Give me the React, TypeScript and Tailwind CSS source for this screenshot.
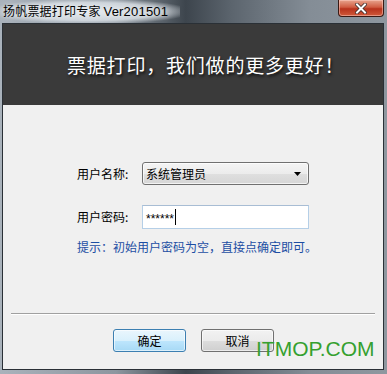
import React from "react";

const cjk = { fontFamily: '"Microsoft YaHei", "Noto Sans CJK SC", "Noto Sans", sans-serif' };

export default function App() {
  return (
    <div
      className="relative w-[387px] h-[374px] overflow-hidden flex flex-col bg-[linear-gradient(90deg,#a9b2bb_0%,#8d969f_30%,#3d454d_48%,#5c656e_60%,#848d96_80%,#8e979f_100%)]"
      style={cjk}
    >
      {/* title bar */}
      <div className="relative h-[23px] shrink-0 flex items-center pl-[3px]">
        <div className="absolute left-0 top-0 w-[180px] h-[23px] bg-[radial-gradient(ellipse_at_center,rgba(230,235,240,0.95)_0%,rgba(220,226,232,0.8)_55%,rgba(220,226,232,0)_80%)]" />
        <span className="relative text-[12px] leading-[14px] text-black tracking-[0.2px] [text-shadow:0_0_6px_rgba(255,255,255,0.9)]">
          扬帆票据打印专家 <span style={{ fontFamily: '"Segoe UI", "Liberation Sans", sans-serif' }} className="text-[13px]">Ver201501</span>
        </span>
        {/* close button */}
        <div className="absolute left-[338px] top-0 w-[46px] h-[17px] rounded-b-[4px] border border-t-0 border-[#3a1a14] bg-[linear-gradient(180deg,#e8a48e_0%,#d05c42_45%,#b8321c_55%,#cf5a3a_100%)] flex items-center justify-center shadow-[inset_0_0_0_1px_rgba(255,210,200,0.5)]">
          <svg width="12" height="11" viewBox="0 0 12 11">
            <path d="M2 1.5 L10 9.5 M10 1.5 L2 9.5" stroke="#3a2a28" strokeWidth="3.6" strokeLinecap="square" />
            <path d="M2 1.5 L10 9.5 M10 1.5 L2 9.5" stroke="#ffffff" strokeWidth="2" strokeLinecap="square" />
          </svg>
        </div>
      </div>

      {/* client area */}
      <div className="ml-[2px] w-[382px] h-[347px] border border-[#2a3036] flex flex-col bg-[#f0f0f0] relative">
        {/* header */}
        <div className="h-[81px] shrink-0 bg-[#3a3a3a] flex items-center pl-[64px]">
          <span className="text-white text-[19px] leading-[22px] tracking-[0.8px] [text-shadow:1px_2px_3px_rgba(0,0,0,0.8)]">
            票据打印，我们做的更多更好！
          </span>
        </div>

        {/* form */}
        <div className="flex-1 flex flex-col">
          <div className="pt-[57px] pl-[74px] flex flex-col">
            <div className="flex items-center h-[23px]">
              <span className="w-[65px] text-[12px] text-black">用户名称:</span>
              <div className="w-[167px] h-[23px] rounded-[3px] border border-[#707070] bg-[linear-gradient(180deg,#f4f4f4_0%,#ececec_50%,#dfdfdf_51%,#d6d6d6_100%)] flex items-center pl-[3px] pr-[7px] shadow-[inset_0_0_0_1px_rgba(255,255,255,0.7)]">
                <span className="flex-1 text-[12px] text-black leading-[16px]">系统管理员</span>
                <svg width="7" height="4" viewBox="0 0 7 4">
                  <path d="M0 0 H7 L3.5 4 Z" fill="#000" />
                </svg>
              </div>
            </div>
            <div className="flex items-center h-[24px] mt-[20px]">
              <span className="w-[65px] text-[12px] text-black">用户密码:</span>
              <div className="w-[167px] h-[24px] border border-[#b5cfe7] border-t-[#a8bdd4] bg-white flex items-center pl-[3px]">
                <span className="text-[12px] text-black leading-[12px] pt-[3px]" style={{ fontFamily: '"Liberation Sans", sans-serif' }}>
                  ******
                </span>
                <span className="w-[1px] h-[16px] bg-black ml-[1px]" />
              </div>
            </div>
            <div className="mt-[10px] h-[16px] flex items-center text-[12px] text-[#1c4ea3]">
              提示：初始用户密码为空，直接点确定即可。
            </div>
          </div>

          <div className="mt-auto">
            <div className="ml-[8px] mr-[8px] h-[1px] bg-[#a0a0a0] border-b border-white box-content" />
            <div className="flex pl-[110px] gap-[15px] mt-[14px] mb-[17px]">
              <div className="w-[73px] h-[23px] rounded-[3px] border border-[#3c7fb1] bg-[linear-gradient(180deg,#eaf6fd_0%,#d9f0fc_50%,#bee6fd_51%,#a7d9f5_100%)] flex items-center justify-center shadow-[inset_0_0_0_1px_rgba(255,255,255,0.6)]">
                <span className="text-[12px] text-black">确定</span>
              </div>
              <div className="w-[73px] h-[23px] rounded-[3px] border border-[#707070] bg-[linear-gradient(180deg,#f2f2f2_0%,#ebebeb_50%,#dddddd_51%,#cfcfcf_100%)] flex items-center justify-center shadow-[inset_0_0_0_1px_rgba(255,255,255,0.6)]">
                <span className="text-[12px] text-black">取消</span>
              </div>
            </div>
          </div>
        </div>
      </div>

      {/* watermark */}
      <div
        className="absolute left-[256px] top-[337px] text-[21px] leading-[24px] text-[#35a02f]"
        style={{ fontFamily: '"Liberation Sans", Arial, sans-serif' }}
      >
        ITMOP.COM
      </div>
    </div>
  );
}
